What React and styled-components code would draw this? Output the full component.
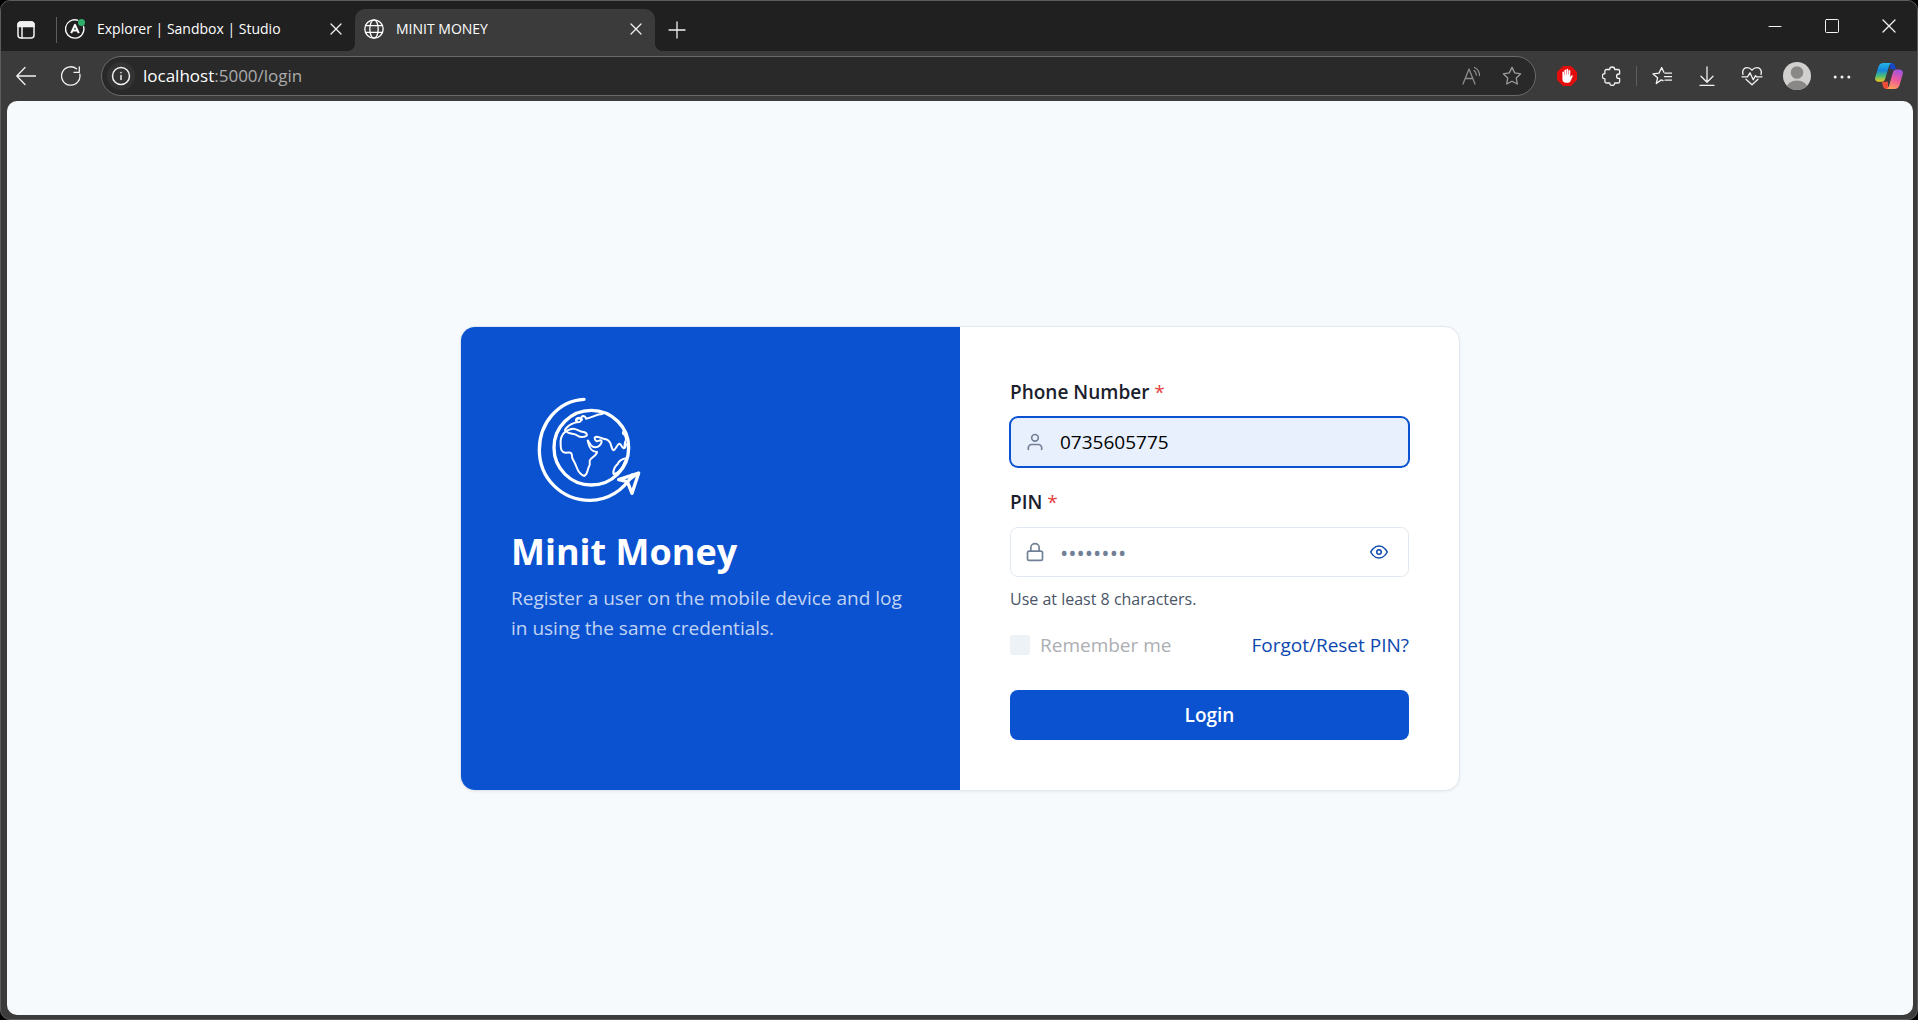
import React from "react";
import styled, { createGlobalStyle } from "styled-components";
import { FiUser, FiLock, FiEye } from "react-icons/fi";

const GlobalStyle = createGlobalStyle`
  *, *::before, *::after { box-sizing: border-box; }
  body {
    margin: 0;
    background: #000;
    font-family: "Open Sans", "Noto Sans", sans-serif;
  }
  button, input { font-family: inherit; }
  svg { display: block; flex: none; }
`;

/* ---------- Browser window ---------- */

const BrowserWindow = styled.div`
  display: flex;
  flex-direction: column;
  min-height: 100vh;
  border: 1px solid #5c5c5c;
  border-radius: 10px;
  overflow: hidden;
  background: #3b3b3b;
`;

const TabStrip = styled.header`
  display: flex;
  align-items: center;
  height: 50px;
  background: #202020;
  color: #fff;
`;

const TabList = styled.div`
  display: flex;
  align-items: center;
  align-self: flex-end;
  height: 42px;
`;

const IconButton = styled.button`
  display: flex;
  align-items: center;
  justify-content: center;
  flex: none;
  width: ${(p) => p.$width || 45}px;
  height: ${(p) => p.$height || 40}px;
  padding: 0;
  border: 0;
  background: transparent;
  color: ${(p) => p.$color || "#f2f2f2"};
  cursor: pointer;
`;

const Divider = styled.span`
  flex: none;
  width: 1px;
  height: ${(p) => p.$height}px;
  margin: 0 ${(p) => p.$gap}px;
  background: #5e5e5e;
`;

const Tab = styled.div`
  position: relative;
  display: flex;
  align-items: center;
  gap: 12px;
  width: ${(p) => (p.$active ? 300 : 293)}px;
  height: 42px;
  padding: 0 7px 2px ${(p) => (p.$active ? 9 : 3)}px;
  border-radius: 10px 10px 0 0;
  background: ${(p) => (p.$active ? "#3b3b3b" : "transparent")};

  &::before, &::after {
    content: "";
    display: ${(p) => (p.$active ? "block" : "none")};
    position: absolute;
    bottom: 0;
    width: 8px;
    height: 8px;
  }
  &::before {
    right: 100%;
    background: radial-gradient(circle at 0 0, transparent 8px, #3b3b3b 8px);
  }
  &::after {
    left: 100%;
    background: radial-gradient(circle at 100% 0, transparent 8px, #3b3b3b 8px);
  }
`;

const TabTitle = styled.span`
  flex: 1;
  font-size: 14px;
  line-height: 20px;
  white-space: nowrap;
`;

const WindowControls = styled.div`
  display: flex;
  margin-left: auto;
`;

const Toolbar = styled.nav`
  display: flex;
  align-items: center;
  height: 50px;
  padding: 0 3px 0 2px;
`;

const AddressBar = styled.div`
  display: flex;
  align-items: center;
  flex: 1;
  height: 40px;
  margin: 0 8px;
  padding: 0 3px 0 5px;
  border: 1px solid #6b6b6b;
  border-radius: 20px;
  background: #292929;
`;

const SiteInfo = styled(IconButton)`
  width: 28px;
  height: 28px;
  border-radius: 50%;
  background: #333;
`;

const Url = styled.div`
  flex: 1;
  padding-left: 8px;
  font-size: 17px;
  line-height: 24px;
  color: #ababab;
  outline: none;

  b { font-weight: 400; color: #fff; }
`;

/* ---------- Login page ---------- */

const Page = styled.main`
  display: flex;
  flex: 1;
  align-items: center;
  justify-content: center;
  margin: 0 4px 4px 6px;
  border-radius: 10px;
  background: #f6fafd;
`;

const Card = styled.section`
  display: grid;
  grid-template-columns: 1fr 1fr;
  width: 100%;
  max-width: 1000px;
  border: 1px solid #e2e8f0;
  border-radius: 15px;
  overflow: hidden;
  background: #fff;
  box-shadow: 0 1px 3px rgba(0, 0, 0, 0.06);
`;

const Brand = styled.div`
  padding: 50px;
  background: #0a52d0;
  color: #fff;
`;

const BrandTitle = styled.h1`
  margin: 0 0 6px;
  font-size: 36px;
  font-weight: 700;
  line-height: 50px;
`;

const BrandText = styled.p`
  margin: 0;
  font-size: 19px;
  line-height: 30px;
  color: #c2d4f3;
`;

const Form = styled.form`
  display: flex;
  flex-direction: column;
  gap: 20px;
  padding: 50px;
`;

const Field = styled.div`
  display: flex;
  flex-direction: column;
  gap: 10px;
`;

const Label = styled.label`
  font-size: 19px;
  font-weight: 600;
  line-height: 30px;
  color: #1a202c;

  span { font-weight: 400; color: #e53e3e; }
`;

const InputBox = styled.div`
  display: flex;
  align-items: center;
  gap: 15px;
  height: 50px;
  padding: 0 14px;
  border: 1px solid ${(p) => (p.$focused ? "#0a52d0" : "#e2e8f0")};
  border-radius: 8px;
  box-shadow: ${(p) => (p.$focused ? "0 0 0 1px #0a52d0" : "none")};
  background: ${(p) => (p.$focused ? "#e8f0fe" : "#fff")};
  color: #718096;
`;

const Input = styled.input`
  flex: 1;
  min-width: 0;
  height: 100%;
  padding: 0;
  border: 0;
  outline: none;
  background: transparent;
  font-size: ${(p) => (p.type === "password" ? 22 : 19)}px;
  color: #000;

  &::placeholder { color: #718096; opacity: 1; }
`;

const Hint = styled.p`
  margin: 0;
  padding-top: 2px;
  font-size: 16px;
  line-height: 21px;
  color: #4a5568;
`;

const Options = styled.div`
  display: flex;
  align-items: center;
  justify-content: space-between;
  line-height: 30px;
  font-size: 19px;
`;

const Remember = styled.label`
  display: flex;
  align-items: center;
  gap: 10px;
  color: #acaeb3;
`;

const Checkbox = styled.input`
  appearance: none;
  width: 20px;
  height: 20px;
  margin: 0;
  border-radius: 2px;
  background: #edf2f7;
`;

const ResetLink = styled.a`
  color: #0c48b0;
  text-decoration: none;
`;

const LoginButton = styled.button`
  height: 50px;
  margin-top: 10px;
  border: 0;
  border-radius: 8px;
  background: #0a52d0;
  color: #fff;
  font-size: 19px;
  font-weight: 600;
  cursor: pointer;
`;

/* ---------- Drawings ---------- */

const Icon = ({ size = 20, width = 1.3, children, ...rest }) => (
  <svg width={size} height={size} viewBox={`0 0 ${size} ${size}`} fill="none" stroke="currentColor"
    strokeWidth={width} strokeLinecap="round" strokeLinejoin="round" aria-hidden="true" {...rest}>
    {children}
  </svg>
);

const TabMenuIcon = () => (
  <Icon width={1.5}>
    <rect x="2" y="2" width="16" height="16" rx="3" />
    <path d="M2 5a3 3 0 0 1 3-3h10a3 3 0 0 1 3 3v1.5H2z" fill="currentColor" />
    <path d="M6 7v11" />
  </Icon>
);

const StudioIcon = () => (
  <Icon width={1.4}>
    <path d="M18.6 7.6A9.2 9.2 0 1 1 12.5 1.2" />
    <path d="M6.200 14.200 10 5.800l3.800 8.400M8 11.500h4" strokeWidth="2" strokeLinecap="butt" />
    <circle cx="16.500" cy="3.500" r="3.500" fill="#2fae6b" stroke="none" />
  </Icon>
);

const GlobeIcon = () => (
  <Icon>
    <circle cx="10" cy="10" r="9.2" />
    <ellipse cx="10" cy="10" rx="4.2" ry="9.2" />
    <path d="M1.6 6.7h16.8M1.6 13.3h16.8" />
  </Icon>
);

const CloseIcon = ({ size = 12 }) => (
  <Icon size={size}>
    <path d={`M1 1 ${size - 1} ${size - 1}M${size - 1} 1 1 ${size - 1}`} />
  </Icon>
);

const AdBlockIcon = () => (
  <Icon stroke="none">
    <path d="M6 0h8l6 6v8l-6 6H6l-6-6V6z" fill="#e40d0d" />
    <path d="M5.4 11V6.2a.8.8 0 0 1 1.6 0V9h.4V4.2a.9.9 0 0 1 1.7 0V8.600h.4V3.400a.9.9 0 0 1 1.700 0V8.600h.4V4.500a.9.9 0 0 1 1.700 0v6.700l1-1.500c.6-.9 1.800-.3 1.400.6l-2 4.500c-.6 1.400-1.500 2-3 2H9c-2.300 0-3.600-1.500-3.600-3.600z" fill="#fff" />
  </Icon>
);

const PuzzleIcon = () => (
  <Icon>
    <path d="M4.500 3.500h3.200a2.500 2.500 0 0 1 5 0h3.300a1.600 1.600 0 0 1 1.600 1.600V8h-.8a2.200 2.200 0 0 0 0 4.400h.8v3a1.600 1.600 0 0 1-1.600 1.600h-3.300a2.500 2.500 0 0 1-5 0H4.500a1.600 1.600 0 0 1-1.600-1.600v-2.600a2.600 2.600 0 0 1 0-5.200V5.100a1.600 1.600 0 0 1 1.600-1.600z" />
  </Icon>
);

const STAR = "m10 1.400 2.700 5.500 6 .9-4.400 4.200 1 6-5.300-2.800L4.700 18l1-6L1.300 7.800l6-.9z";

const FavoritesIcon = () => (
  <Icon>
    <path d="M11 14.700 9.300 13.900l-5 3.600 1.300-5.700L1 7.900l6-.8L9.700 1.500l2.200 4.800" />
    <path d="M13 7.200h7M12.500 10.700H20M13 14.200h7" />
  </Icon>
);

const HeartIcon = () => (
  <Icon size={22}>
    <path d="M2 9.500C.8 5.800 2.800 2.600 6 2.600c2.200 0 3.800 1 5 2.600 1.200-1.600 2.800-2.600 5-2.600 3.200 0 5.200 3.200 4 6.900M5 14.300l6 5.500 6-5.500" />
    <path d="M1 11.800h5.500L9 7.800l3.200 7 2.300-4.200 1 1.200H21" />
  </Icon>
);

const AvatarIcon = () => (
  <svg width="28" height="28" viewBox="0 0 28 28" aria-hidden="true">
    <defs>
      <clipPath id="avatar-disc"><circle cx="14" cy="14" r="14" /></clipPath>
    </defs>
    <g clipPath="url(#avatar-disc)">
      <rect width="28" height="28" fill="#d2d0ce" />
      <circle cx="14" cy="10.500" r="6.300" fill="#8a8886" />
      <ellipse cx="14" cy="26" rx="10.500" ry="7.500" fill="#8a8886" />
    </g>
  </svg>
);

const CopilotIcon = () => (
  <svg width="28" height="26" viewBox="0 0 28 26" aria-hidden="true">
    <defs>
      <linearGradient id="cp-left" x1="0" y1="0" x2="0" y2="1">
        <stop offset="0" stopColor="#22b5e8" /><stop offset=".4" stopColor="#1688dc" />
        <stop offset=".7" stopColor="#4cbf78" /><stop offset="1" stopColor="#f2c71c" />
      </linearGradient>
      <linearGradient id="cp-right" x1="0.600" y1="0" x2="0.300" y2="1">
        <stop offset="0" stopColor="#a253e0" /><stop offset=".5" stopColor="#ee5a9c" />
        <stop offset="1" stopColor="#fd9f57" />
      </linearGradient>
    </defs>
    <path d="M15 0h1.500c2 0 3 1.200 3.600 3l1 3.300h-6z" fill="#1748c8" />
    <path d="M13 26h-1.500c-2 0-3-1.200-3.600-3l-1-4.300h6z" fill="#ee4c38" />
    <path d="M8.500 0h8.300c-1.800.5-2.500 2-3 3.700l-3.600 12c-.6 2-1.800 3-3.800 3H3.500c-2.700 0-4-2-3.200-4.800L3.400 4C4.200 1.400 6 0 8.500 0z" fill="url(#cp-left)" />
    <path d="M19.500 26h-8.300c1.800-.5 2.500-2 3-3.700l3.600-12.600c.6-2 1.800-3.200 3.800-3.200h2.900c2.700 0 4 2 3.200 4.800L24.600 22c-.8 2.600-2.600 4-5.100 4z" fill="url(#cp-right)" />
  </svg>
);

const GlobeLogo = () => (
  <svg width="150" height="150" viewBox="33 21 450 450" fill="none" stroke="#fff"
    strokeLinecap="round" strokeLinejoin="round" role="img" aria-label="Minit Money">
    <path d="M252 88C176 92 118 158 118 240c0 84 66 151 152 151 54 0 100-30 127-76" strokeWidth="10" />
    <circle cx="274" cy="233" r="112" strokeWidth="10" />
    <g strokeWidth="6">
      <path d="M197 184c-12 9-17 22-15 42 0 16 5 22 14 22 10 1 17-4 19 4 0 12 3 18 9 26 7 12 8 34 29 40 10-6 9-17 13-26 5-8 4-11 3-18-1-9 22-17 22-28-14 0-23-7-28-34" />
      <path d="M197 184c8-4 15-8 22-8 13 0 17 10 32 10 12 3 13 12 2 14-8 3-14 1-22-4-9-7-16-3-27-8-6-6-14-5-5-14 11-12 27-17 38-18 10-2 7-15-3-12-7 3-8 6-4 11" />
      <path d="M229 153c2-9 10-9 17-4M246 149c-8-9 8-17 12-3 18-2 30-14 49-14" />
      <path d="M264 212c6 10 10 20 22 20 10 0 18-9 19-17 0-8-9-2-14-1-8-4-10-14-1-14 12 1 18 7 28 8 20 5 12 28 23 33 7-2 10-20 18-20 5 1 5 11 12 14 5-5 1-16 6-22" />
      <path d="M378 222c0 5-1 9-4 12M376 182c-9 1-10 12-1 12-1 6 4 8 3 15" />
      <path d="M380 264c-14 4-22 6-27 18-6 6-13 11-13 28M378 270c-7 8-6 16-13 24-5 7-12 16-24 18" />
    </g>
    <path d="m416 309-60 20 26 6 14 35z" strokeWidth="10" />
    <path d="m416 309-34 26" strokeWidth="7" />
  </svg>
);

/* ---------- App ---------- */

export default function App() {
  return (
    <>
      <GlobalStyle />
      <BrowserWindow>
        <TabStrip>
          <TabList>
            <IconButton $width={50} aria-label="Tab actions"><TabMenuIcon /></IconButton>
            <Divider $height={26} $gap={5} />
            <Tab>
              <StudioIcon />
              <TabTitle>Explorer | Sandbox | Studio</TabTitle>
              <IconButton $width={24} $height={24} aria-label="Close tab"><CloseIcon /></IconButton>
            </Tab>
            <Tab $active>
              <GlobeIcon />
              <TabTitle>MINIT MONEY</TabTitle>
              <IconButton $width={24} $height={24} aria-label="Close tab"><CloseIcon /></IconButton>
            </Tab>
            <IconButton aria-label="New tab" $width={43} $height={38}>
              <Icon size={18}><path d="M9 1v16M1 9h16" /></Icon>
            </IconButton>
          </TabList>
          <WindowControls>
            <IconButton $width={57} aria-label="Minimize">
              <Icon size={14} width={1}><path d="M1 7.500h12" /></Icon>
            </IconButton>
            <IconButton $width={57} aria-label="Maximize">
              <Icon size={14} width={1}><rect x=".5" y=".5" width="13" height="13" rx="1" /></Icon>
            </IconButton>
            <IconButton $width={57} aria-label="Close"><CloseIcon size={14} /></IconButton>
          </WindowControls>
        </TabStrip>

        <Toolbar>
          <IconButton aria-label="Back">
            <Icon><path d="M19.500 10H1M9 1.500.8 10 9 18.500" /></Icon>
          </IconButton>
          <IconButton aria-label="Refresh">
            <Icon><path d="M18.800 8.200A9.200 9.200 0 1 1 15.500 2.800M18.300 1v5.300H13" /></Icon>
          </IconButton>
          <AddressBar>
            <SiteInfo aria-label="Site information">
              <Icon width={1.500}>
                <circle cx="10" cy="10" r="8.500" />
                <path d="M10 9.500v4M10 6.500v.2" />
              </Icon>
            </SiteInfo>
            <Url role="textbox" aria-label="Address"><b>localhost</b>:5000/login</Url>
            <IconButton $width={40} $height={36} $color="#8c8c8c" aria-label="Read aloud">
              <Icon>
                <path d="M1 18 7 3l6 15M3.200 12.500h7.600M12 4.500c1.500 1 2.300 2.500 2.300 4.500M12.500 1.500c3 1.500 5 4 5 8" />
              </Icon>
            </IconButton>
            <IconButton $width={40} $height={36} $color="#9c9c9c" aria-label="Add to favorites">
              <Icon><path d={STAR} /></Icon>
            </IconButton>
          </AddressBar>
          <IconButton aria-label="Ad blocker"><AdBlockIcon /></IconButton>
          <IconButton aria-label="Extensions"><PuzzleIcon /></IconButton>
          <Divider $height={20} $gap={2} />
          <IconButton aria-label="Favorites"><FavoritesIcon /></IconButton>
          <IconButton aria-label="Downloads">
            <Icon><path d="M10 .8v15M4 10.200l6 6 6-6M3 19.300h14" /></Icon>
          </IconButton>
          <IconButton aria-label="Browser essentials"><HeartIcon /></IconButton>
          <IconButton aria-label="Profile"><AvatarIcon /></IconButton>
          <IconButton aria-label="Settings and more">
            <Icon stroke="none" fill="currentColor">
              <circle cx="3.200" cy="11" r="1.500" /><circle cx="10" cy="11" r="1.500" /><circle cx="16.800" cy="11" r="1.500" />
            </Icon>
          </IconButton>
          <IconButton $width={50} aria-label="Copilot"><CopilotIcon /></IconButton>
        </Toolbar>

        <Page>
          <Card>
            <Brand>
              <GlobeLogo />
              <BrandTitle>Minit Money</BrandTitle>
              <BrandText>Register a user on the mobile device and log in using the same credentials.</BrandText>
            </Brand>
            <Form onSubmit={(e) => e.preventDefault()}>
              <Field>
                <Label htmlFor="phone">Phone Number <span>*</span></Label>
                <InputBox $focused>
                  <FiUser size={20} />
                  <Input id="phone" type="tel" defaultValue="0735605775" />
                </InputBox>
              </Field>
              <Field>
                <Label htmlFor="pin">PIN <span>*</span></Label>
                <InputBox>
                  <FiLock size={20} />
                  <Input id="pin" type="password" placeholder="••••••••" />
                  <IconButton type="button" $width={30} $height={30} $color="#0c48b0" aria-label="Show PIN">
                    <FiEye size={18} />
                  </IconButton>
                </InputBox>
                <Hint>Use at least 8 characters.</Hint>
              </Field>
              <Options>
                <Remember><Checkbox type="checkbox" disabled />Remember me</Remember>
                <ResetLink href="#reset">Forgot/Reset PIN?</ResetLink>
              </Options>
              <LoginButton type="submit">Login</LoginButton>
            </Form>
          </Card>
        </Page>
      </BrowserWindow>
    </>
  );
}
